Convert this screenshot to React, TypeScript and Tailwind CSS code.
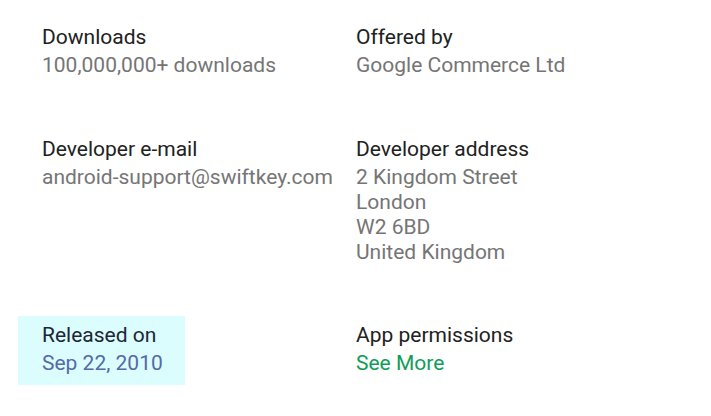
import React from "react";

const Title = ({ children, className = "text-[#212121]" }: { children: React.ReactNode; className?: string }) => (
  <div className={`text-[21px] leading-[31px] ${className}`}>{children}</div>
);

const Value = ({ children, className = "text-[#757575]" }: { children: React.ReactNode; className?: string }) => (
  <div className={`text-[21px] leading-[25px] ${className}`}>{children}</div>
);

export default function App() {
  return (
    <div
      className="w-[711px] h-[416px] bg-white overflow-hidden"
      style={{ fontFamily: "Roboto, 'Noto Sans', sans-serif" }}
    >
      <div className="grid grid-cols-[314px_1fr] pl-[42px] pt-[22px]">
        <div>
          <Title>Downloads</Title>
          <Value>100,000,000+ downloads</Value>
        </div>
        <div>
          <Title>Offered by</Title>
          <Value>Google Commerce Ltd</Value>
        </div>

        <div className="mt-[56px]">
          <Title>Developer e-mail</Title>
          <Value>android-support@swiftkey.com</Value>
        </div>
        <div className="mt-[56px]">
          <Title>Developer address</Title>
          <Value>2 Kingdom Street</Value>
          <Value>London</Value>
          <Value>W2 6BD</Value>
          <Value>United Kingdom</Value>
        </div>

        <div className="mt-[51px] -ml-[24px]">
          <div className="w-[167px] bg-[#dcfdfd] pl-[24px] pt-[4px] pb-[9px]">
            <Title className="text-[#1c2636]">Released on</Title>
            <Value className="text-[#5669a8]">Sep 22, 2010</Value>
          </div>
        </div>
        <div className="mt-[55px]">
          <Title>App permissions</Title>
          <Value className="text-[#0f9d58]">See More</Value>
        </div>
      </div>
    </div>
  );
}
